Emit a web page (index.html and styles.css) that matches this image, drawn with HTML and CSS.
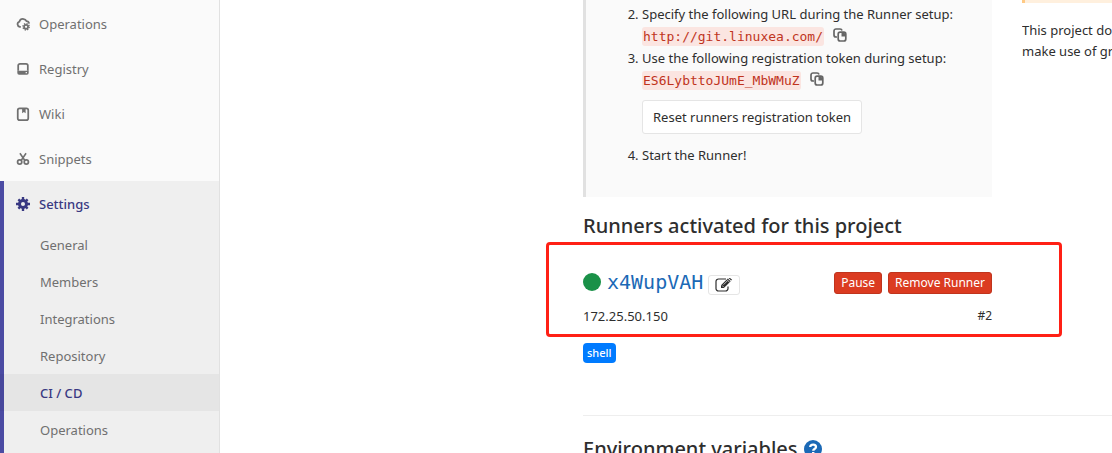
FILE: index.html
```html
<!DOCTYPE html>
<html lang="en">
<head>
<meta charset="utf-8">
<title>CI / CD Settings</title>
<link rel="stylesheet" href="styles.css">
</head>
<body>
<svg class="sprite" aria-hidden="true">
  <symbol id="copy" viewBox="0 0 14 14">
    <path d="M4 9H3a2 2 0 0 1-2-2V3a2 2 0 0 1 2-2h4a2 2 0 0 1 2 1.500" fill="none" stroke="currentColor" stroke-width="1.700"/>
    <rect x="5.200" y="4.200" width="7.600" height="8.800" rx="2" fill="none" stroke="currentColor" stroke-width="1.700"/>
    <path d="M8.500 4v4.500H13V6.500L10.500 4z" fill="currentColor"/>
  </symbol>
</svg>
<div class="page">
  <nav class="sidebar" aria-label="Project">
    <a class="item" href="#operations"><svg class="icon" viewBox="0 0 16 16"><path d="M5.500 11.200H4.300A3 3 0 0 1 3.800 5.400C4.500 3 6.500 2 8.700 2.300c1.700.2 2.700 1.200 3.300 2.400 1.700.2 2.800 1.200 3 2.800" fill="none" stroke="currentColor" stroke-width="2"/><circle cx="11.500" cy="11.200" r="2.300" fill="none" stroke="currentColor" stroke-width="2"/><circle cx="11.500" cy="11.200" r="3.600" fill="none" stroke="currentColor" stroke-width="1.600" stroke-dasharray="1.500 1.327"/></svg>Operations</a>
    <a class="item" href="#registry"><svg class="icon" viewBox="0 0 16 16"><path d="M2.500 10V4a2 2 0 0 1 2-2h7a2 2 0 0 1 2 2v6" fill="none" stroke="currentColor" stroke-width="2"/><path fill-rule="evenodd" d="M1.500 10h13v2.500a2 2 0 0 1-2 2h-9a2 2 0 0 1-2-2zM11 11.500v1.300h1.500v-1.300z" fill="currentColor"/></svg>Registry</a>
    <a class="item" href="#wiki"><svg class="icon" viewBox="0 0 16 16"><rect x="2" y="1.500" width="12" height="13.500" rx="2.200" fill="none" stroke="currentColor" stroke-width="2"/><path d="M7 2h4v5L9 5.600 7 7z" fill="currentColor"/></svg>Wiki</a>
    <a class="item" href="#snippets"><svg class="icon" viewBox="0 0 16 16"><path d="M4.500 1.500l5.800 8.500M11.500 1.500L5.700 10" fill="none" stroke="currentColor" stroke-width="1.800"/><circle cx="4.200" cy="11.500" r="2.400" fill="none" stroke="currentColor" stroke-width="2"/><circle cx="11.800" cy="11.500" r="2.400" fill="none" stroke="currentColor" stroke-width="2"/></svg>Snippets</a>
    <div class="section">
      <a class="item current" href="#settings"><svg class="icon" viewBox="0 0 16 16"><circle cx="8" cy="8" r="4" fill="none" stroke="currentColor" stroke-width="3.400"/><path d="M8 0v4M8 12v4M0 8h4M12 8h4M2.700 2.700l2.500 2.500M10.800 10.800l2.500 2.500M2.700 13.300l2.500-2.500M10.800 5.200l2.500-2.500" stroke="currentColor" stroke-width="2.700"/></svg>Settings</a>
      <a class="sub" href="#general">General</a>
      <a class="sub" href="#members">Members</a>
      <a class="sub" href="#integrations">Integrations</a>
      <a class="sub" href="#repository">Repository</a>
      <a class="sub active" href="#cicd" aria-current="page">CI / CD</a>
      <a class="sub" href="#ops">Operations</a>
    </div>
  </nav>
  <main class="main">
    <div class="content">
      <div class="columns">
        <section>
          <div class="setup">
            <ol class="steps" start="2">
              <li>Specify the following URL during the Runner setup:
                <div class="value"><code>http://git.linuxea.com/</code><button class="copy" type="button" aria-label="Copy URL"><svg viewBox="0 0 14 14"><use href="#copy"/></svg></button></div></li>
              <li>Use the following registration token during setup:
                <div class="value"><code>ES6LybttoJUmE_MbWMuZ</code><button class="copy" type="button" aria-label="Copy token"><svg viewBox="0 0 14 14"><use href="#copy"/></svg></button></div>
                <button class="reset" type="button">Reset runners registration token</button></li>
              <li>Start the Runner!</li>
            </ol>
          </div>
          <h4 class="heading">Runners activated for this project</h4>
          <div class="runner">
            <div class="runner-top">
              <span class="status"></span>
              <a class="runner-name" href="#runner">x4WupVAH</a>
              <button class="edit" type="button" aria-label="Edit"><svg viewBox="0 0 18 14"><path d="M13 8.500v2a2.500 2.500 0 0 1-2.500 2.500h-7A2.500 2.500 0 0 1 1 10.500v-7A2.500 2.500 0 0 1 3.500 1H11" fill="none" stroke="currentColor" stroke-width="1.200"/><path d="M6 7.200L12.800.4l2.900 2.900-6.800 6.800H6z" fill="currentColor"/><path d="M7 7.400L8.800 9.200M11.900 1.600l2.700 2.700M8.500 6.700l4-4" stroke="#fff" stroke-width=".7"/><path d="M13.500 0l2.600 2.600 1-.9L14.600-.3z" fill="currentColor"/></svg></button>
              <div class="actions">
                <button class="danger" type="button">Pause</button>
                <button class="danger" type="button">Remove Runner</button>
              </div>
            </div>
            <div class="runner-info"><span>172.25.50.150</span><span class="number">#2</span></div>
            <div class="highlight"></div>
          </div>
          <span class="tag">shell</span>
        </section>
        <aside class="groups">
          <div class="warning"></div>
          <p>This project does not<br>make use of group</p>
        </aside>
      </div>
      <section class="variables">
        <h4 class="heading">Environment variables <a class="help" href="#help" aria-label="Help"><svg viewBox="0 0 18 18"><circle cx="9" cy="9" r="9" fill="currentColor"/><path d="M6.200 7C6.400 3.700 12 3.800 12 7c0 2-2.800 2-2.800 3.700" fill="none" stroke="#fff" stroke-width="2.300"/><path d="M8 12h2.400v2.300H8z" fill="#fff"/></svg></a></h4>
      </section>
    </div>
  </main>
</div>
</body>
</html>
```
FILE: styles.css
```css
* { box-sizing: border-box; }
body {
  margin: 0;
  color: #2e2e2e;
  background: #fff;
  font: 13px/22px "Noto Sans", "Open Sans", sans-serif;
}
a { text-decoration: none; }
button { font: inherit; margin: 0; cursor: pointer; }
.sprite { position: absolute; width: 0; height: 0; }
.page { display: flex; height: 100vh; overflow: hidden; }

.sidebar {
  flex: 0 0 220px;
  padding-top: 1px;
  background: #fafafa;
  border-right: 1px solid #e1e1e1;
}
.item {
  display: flex;
  align-items: center;
  gap: 9px;
  height: 45px;
  padding-left: 16px;
  color: #707070;
}
.icon { width: 14px; height: 14px; }
.section {
  height: 100%;
  background: #efefef;
  box-shadow: inset 4px 0 #4b4ba3;
}
.current { color: #393982; font-weight: 500; }
.sub {
  display: block;
  padding: 1px 0 0 40px;
  color: #707070;
  line-height: 36px;
}
.active { color: #393982; font-weight: 500; background: rgba(0, 0, 0, .04); }

.main {
  flex: 1;
  min-width: 0;
  display: grid;
  grid-template-columns: minmax(0, 363fr) minmax(0, 529fr);
}
.content { grid-column: 2; }
.columns {
  display: grid;
  grid-template-columns: minmax(0, 409fr) minmax(0, 90fr);
  gap: 30px;
}
.setup {
  padding: 3px 16px 31px 32px;
  border-left: 3px solid #e1e1e1;
  background: #fafafa;
}
.steps { margin: 0; padding-left: 24px; }
.value { display: flex; align-items: center; gap: 9px; height: 22px; }
code {
  padding: 0 1px;
  border-radius: 3px;
  color: #c0341d;
  background: #fbe5e1;
  font: 13px/19px "DejaVu Sans Mono", monospace;
}
.copy { display: flex; padding: 0 0 2px; border: 0; color: #666; background: none; }
.copy svg { width: 14px; height: 14px; }
.reset {
  display: block;
  height: 34px;
  margin: 9px 0 10px;
  padding: 0 10px;
  border: 1px solid #e5e5e5;
  border-radius: 3px;
  color: #2e2e2e;
  background: #fff;
}
.heading {
  display: flex;
  align-items: center;
  gap: 6px;
  margin: 15px 0 0;
  font-size: 20px;
  font-weight: 500;
  line-height: 28px;
  white-space: nowrap;
}
.runner { position: relative; padding-top: 28px; }
.runner-top { display: flex; align-items: center; height: 28px; }
.status { width: 18px; height: 18px; border-radius: 50%; background: #1a9148; }
.runner-name {
  margin: 0 5px 0 6px;
  color: #1b69b6;
  font: 20px/28px "DejaVu Sans Mono", monospace;
}
.edit {
  display: flex;
  align-items: center;
  height: 20px;
  margin-top: 6px;
  padding: 0 6px;
  border: 1px solid #e5e5e5;
  border-radius: 3px;
  color: #2e2e2e;
  background: #fff;
}
.edit svg { width: 18px; height: 14px; }
.actions { display: flex; gap: 6px; margin: 2px 0 0 auto; }
.danger {
  height: 22px;
  padding: 0 6px;
  border: 1px solid #c0341d;
  border-radius: 3px;
  color: #fff;
  background: #db3b21;
  font-size: 12px;
  line-height: 20px;
  white-space: nowrap;
}
.runner-info { display: flex; justify-content: space-between; padding-top: 9px; }
.number { font-size: 12px; }
.highlight {
  position: absolute;
  inset: 2px -70px -10px -37px;
  border: 3px solid #ff2015;
  border-radius: 4px;
  pointer-events: none;
}
.tag {
  display: block;
  width: fit-content;
  margin-top: 16px;
  padding: 0 4px;
  border-radius: 4px;
  color: #fff;
  background: #007bff;
  font-size: 11px;
  font-weight: 500;
  line-height: 20px;
}
.groups { overflow: hidden; white-space: nowrap; }
.groups p { margin: 17px 0 0; line-height: 21px; }
.warning { height: 3px; border-left: 3px solid #ffca85; background: #fff0de; }
.variables { margin-top: 52px; border-top: 1px solid #eee; }
.variables .heading { margin-top: 19px; }
.help { display: flex; color: #1b69b6; }
.help svg { width: 18px; height: 18px; }
```
